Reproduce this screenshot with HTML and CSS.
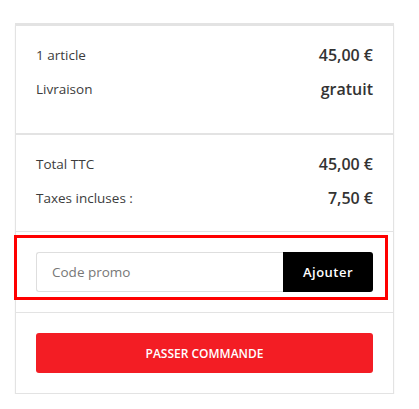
FILE: index.html
```html
<!DOCTYPE html>
<html lang="fr">
<head>
<meta charset="utf-8">
<link rel="stylesheet" href="styles.css">
</head>
<body>
<div class="page">
  <div class="card">
    <div class="section s1">
      <div class="row"><span class="label">1 article</span><span class="value">45,00 €</span></div>
      <div class="row"><span class="label">Livraison</span><span class="value">gratuit</span></div>
    </div>
    <div class="section s2">
      <div class="row"><span class="label">Total TTC</span><span class="value">45,00 €</span></div>
      <div class="row"><span class="label">Taxes incluses :</span><span class="value">7,50 €</span></div>
    </div>
    <div class="section promo">
      <div class="highlight"></div>
      <div class="promo-form">
        <input class="promo-input" type="text" placeholder="Code promo">
        <button class="promo-btn" type="button">Ajouter</button>
      </div>
    </div>
    <div class="section checkout">
      <button class="order-btn" type="button">PASSER COMMANDE</button>
    </div>
  </div>
</div>
</body>
</html>
```

FILE: styles.css
```css
* { box-sizing: border-box; }
html, body { margin: 0; padding: 0; background: #fff; }
body { font-family: "Open Sans", "Liberation Sans", sans-serif; color: #333; }

.page { padding: 23px 0 0 15px; }

.card {
  width: 379px;
  border: 1px solid #e3e3e3;
  border-top: 3px solid #e3e3e3;
  box-shadow: 0 2px 2px rgba(0,0,0,0.05);
  background: #fff;
}

.section { padding: 0 20px; }
.s1 { padding-top: 12px; padding-bottom: 27px; border-bottom: 2px solid #e3e3e3; }
.s2 { padding-top: 12px; padding-bottom: 16px; border-bottom: 1px solid #e3e3e3; }

.row {
  height: 34px;
  display: flex;
  align-items: center;
  justify-content: space-between;
}
.label { font-size: 13.5px; font-weight: 400; color: #3c3c3c; }
.value { font-size: 16px; font-weight: 600; color: #333; }

.promo {
  position: relative;
  padding-top: 20px;
  padding-bottom: 20px;
  border-bottom: 1px solid #e3e3e3;
}
.highlight {
  position: absolute;
  left: -2px;
  top: 3px;
  width: 374px;
  height: 65px;
  border: 3px solid #ff0000;
  pointer-events: none;
}
.promo-form { display: flex; height: 40px; }
.promo-input {
  flex: 1;
  min-width: 0;
  height: 40px;
  border: 1px solid #dedede;
  border-right: none;
  border-radius: 3px 0 0 3px;
  padding: 0 15px;
  font-family: inherit;
  font-size: 13.5px;
  color: #333;
  outline: none;
}
.promo-input::placeholder { color: #777; }
.promo-btn {
  width: 90px;
  height: 40px;
  border: none;
  background: #000;
  color: #fff;
  border-radius: 0 3px 3px 0;
  font-family: inherit;
  font-size: 13px;
  font-weight: 600;
  letter-spacing: 0.5px;
}

.checkout { padding-top: 20px; padding-bottom: 20px; }
.order-btn {
  display: block;
  width: 100%;
  height: 40px;
  border: none;
  border-radius: 3px;
  background: #f31d24;
  color: #fff;
  font-family: inherit;
  font-size: 12px;
  font-weight: 600;
}
```
